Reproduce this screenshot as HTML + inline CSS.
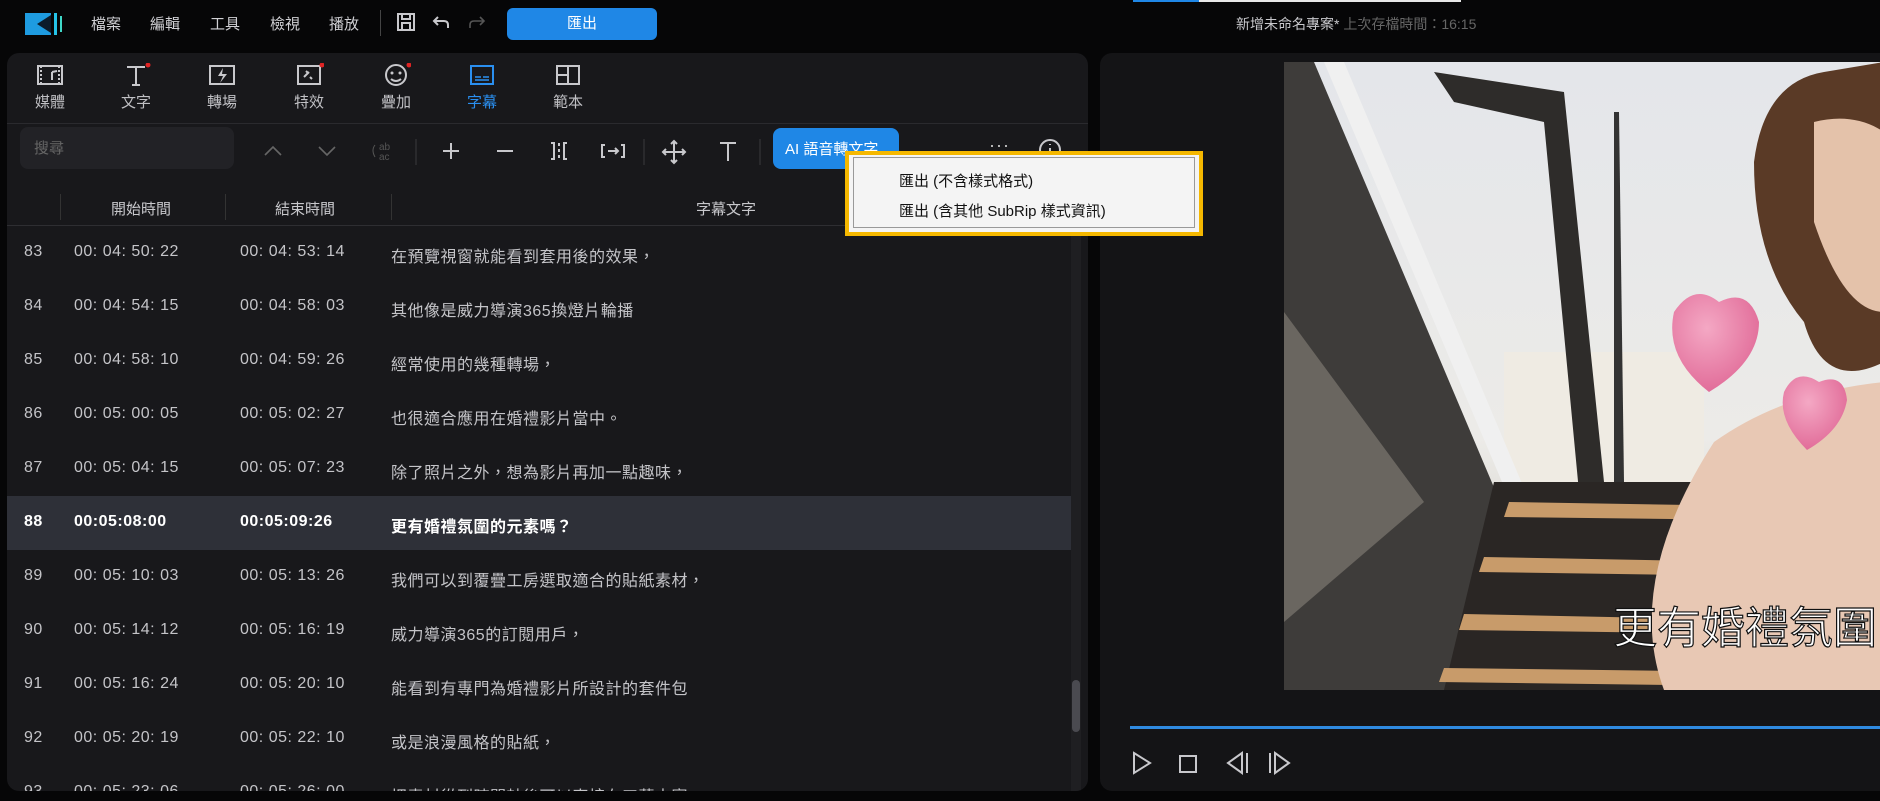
<!DOCTYPE html>
<html><head><meta charset="utf-8">
<style>
*{margin:0;padding:0;box-sizing:border-box}
body{width:1880px;height:801px;background:#060607;overflow:hidden;position:relative;font-family:"Liberation Sans","Noto Sans CJK TC",sans-serif;color:#c8c8cc}
.abs{position:absolute}
.menu span{position:absolute;top:13px;font-size:15px;color:#d0d0d4}
.panel{position:absolute;background:#18181b;border-radius:12px;overflow:hidden}
.tab{position:absolute;top:10px;width:60px;text-align:center;font-size:15px;color:#c0c0c4}
.tab svg{display:block;margin:0 auto 4px}
.row{position:absolute;left:0;width:1067px;height:54px;font-size:16px;color:#c4c4c8}
.row span{position:absolute;top:17px;letter-spacing:.5px}
.hl{background:#2e3038;color:#fff;font-weight:bold}
.ic{stroke:#c8c8cc;fill:none;stroke-width:2}
</style></head><body>
<!-- top bar -->
<svg class="abs" style="left:25px;top:11px" width="42" height="26"><rect x="0" y="2" width="26" height="22" fill="#1e9be0"/><path d="M26 4 L12 13 L26 22Z" fill="#0b1b2a"/><rect x="29" y="2" width="3" height="22" fill="#25c3e8"/><rect x="35" y="5" width="2" height="16" fill="#3fd8c8"/></svg>
<div class="menu"><span style="left:91px">檔案</span><span style="left:150px">編輯</span><span style="left:210px">工具</span><span style="left:270px">檢視</span><span style="left:329px">播放</span></div>
<div class="abs" style="left:380px;top:10px;width:1px;height:26px;background:#444"></div>
<svg class="abs" style="left:396px;top:12px" width="20" height="20"><rect x="2" y="2" width="16" height="16" class="ic" stroke-width="1.6"/><rect x="6" y="2" width="8" height="5" class="ic" stroke-width="1.4"/><rect x="6" y="11" width="8" height="7" class="ic" stroke-width="1.4"/></svg>
<svg class="abs" style="left:432px;top:14px" width="18" height="16"><path d="M6 3 L2 7 L6 11 M2 7 H12 Q16 7 16 11 V14" class="ic" stroke-width="1.6"/></svg>
<svg class="abs" style="left:468px;top:14px" width="18" height="16"><path d="M12 3 L16 7 L12 11 M16 7 H6 Q2 7 2 11 V14" stroke="#555" fill="none" stroke-width="1.6"/></svg>
<div class="abs" style="left:507px;top:8px;width:150px;height:32px;background:#1f87e6;border-radius:6px;color:#fff;font-size:15px;text-align:center;line-height:32px">匯出</div>
<div class="abs" style="left:1133px;top:0;width:66px;height:2px;background:#1f87e6"></div>
<div class="abs" style="left:1199px;top:0;width:262px;height:2px;background:#e8e8e8"></div>
<div class="abs" style="left:1236px;top:14px;font-size:14px;color:#c8c8cc">新增未命名專案* <span style="color:#666">上次存檔時間：16:15</span></div>

<!-- left panel -->
<div class="panel" style="left:7px;top:53px;width:1081px;height:738px">
 <div class="tab" style="left:13px"><svg width="30" height="24"><rect x="3" y="3" width="24" height="18" class="ic"/><path d="M6 3v18M24 3v18" stroke="#c8c8cc" stroke-dasharray="2 2" stroke-width="2"/><path d="M17 9v8M17 9l5-1" class="ic"/></svg>媒體</div>
 <div class="tab" style="left:99px"><svg width="30" height="24"><path d="M6 4H24M15 4V22M11 22h8" class="ic"/><circle cx="27" cy="2" r="2.5" fill="#e02424"/></svg>文字</div>
 <div class="tab" style="left:185px"><svg width="30" height="24"><rect x="3" y="3" width="24" height="18" class="ic"/><path d="M16 5L11 13h5l-3 7 7-9h-5z" fill="#c8c8cc"/></svg>轉場</div>
 <div class="tab" style="left:272px"><svg width="30" height="24"><rect x="4" y="3" width="22" height="18" class="ic"/><path d="M10 14l5-5M12 8l2 2M16 14l2 2" class="ic" stroke-width="1.5"/><circle cx="28" cy="2" r="2.5" fill="#e02424"/></svg>特效</div>
 <div class="tab" style="left:359px"><svg width="30" height="24"><circle cx="15" cy="12" r="10" class="ic"/><circle cx="11" cy="10" r="1.5" fill="#c8c8cc"/><circle cx="19" cy="10" r="1.5" fill="#c8c8cc"/><path d="M10 16q5 4 10 0" class="ic" stroke-width="1.6"/><circle cx="28" cy="2" r="2.5" fill="#e02424"/></svg>疊加</div>
 <div class="tab" style="left:445px;color:#2a8ff0"><svg width="30" height="24"><rect x="4" y="3" width="22" height="18" stroke="#2a8ff0" fill="none" stroke-width="2"/><path d="M8 14h6M16 14h6M8 17h14" stroke="#2a8ff0" stroke-width="1.5"/></svg>字幕</div>
 <div class="tab" style="left:531px"><svg width="30" height="24"><rect x="4" y="3" width="22" height="18" class="ic"/><path d="M15 3v18M4 12h11" class="ic"/></svg>範本</div>
 <div class="abs" style="left:0;top:70px;width:1081px;height:1px;background:#2a2a2e"></div>
 <!-- toolbar -->
 <div class="abs" style="left:13px;top:74px;width:214px;height:42px;background:#222226;border-radius:8px;font-size:15px;color:#666;padding:10px 14px">搜尋</div>
 <svg class="abs" style="left:255px;top:86px" width="520" height="26">
  <path d="M3 16l8-8 8 8M57 8l8 8 8-8" stroke="#666" fill="none" stroke-width="1.6"/>
  <text x="117" y="11" font-size="10" fill="#555" font-family="Liberation Sans">ab</text><text x="117" y="21" font-size="10" fill="#555" font-family="Liberation Sans">ac</text><path d="M113 6q-4 5 0 12" stroke="#555" fill="none"/>
  <line x1="154" y1="0" x2="154" y2="26" stroke="#3a3a3e"/>
  <path d="M181 12h16M189 4v16M235 12h16" class="ic"/>
  <path d="M289 4h3v16h-3M305 4h-3v16h3M297 4v3M297 10v3M297 16v3" class="ic" stroke-width="1.6"/>
  <path d="M343 6h-3v12h3M359 6h3v12h-3M346 12h10M353 9l3 3-3 3" class="ic" stroke-width="1.6"/>
  <line x1="382" y1="0" x2="382" y2="26" stroke="#3a3a3e"/>
  <path d="M412 2v22M401 13h22M409 5l3-3 3 3M409 21l3 3 3-3M404 10l-3 3 3 3M420 10l3 3-3 3" class="ic" stroke-width="1.6"/>
  <path d="M458 4h16M466 4v18" class="ic"/>
  <line x1="498" y1="0" x2="498" y2="26" stroke="#3a3a3e"/>
 </svg>
 <div class="abs" style="left:766px;top:75px;width:126px;height:41px;background:#1f87e6;border-radius:8px;color:#fff;font-size:15px;padding:10px 12px">AI 語音轉文字</div>
 <div class="abs" style="left:982px;top:82px;font-size:18px;color:#ccc;letter-spacing:1px">···</div>
 <svg class="abs" style="left:1030px;top:84px" width="26" height="26"><circle cx="13" cy="13" r="10" class="ic"/><path d="M13 11v7M13 7v1" class="ic"/></svg>
 <!-- header -->
 <div class="abs" style="left:0;top:137px;width:1081px;height:35px;font-size:15px;color:#c8c8cc">
  <div class="abs" style="left:53px;top:4px;width:1px;height:26px;background:#333"></div>
  <div class="abs" style="left:218px;top:4px;width:1px;height:26px;background:#333"></div>
  <div class="abs" style="left:384px;top:4px;width:1px;height:26px;background:#333"></div>
  <span class="abs" style="left:104px;top:8px">開始時間</span>
  <span class="abs" style="left:268px;top:8px">結束時間</span>
  <span class="abs" style="left:689px;top:8px">字幕文字</span>
 </div>
 <div class="abs" style="left:0;top:172px;width:1081px;height:1px;background:#2e2e32"></div>
 <div class="abs" style="left:0;top:173px;width:1081px;height:565px;overflow:hidden">
  <div class="row" style="top:0"><span style="left:17px">83</span><span style="left:67px">00: 04: 50: 22</span><span style="left:233px">00: 04: 53: 14</span><span style="left:384px">在預覽視窗就能看到套用後的效果，</span></div>
  <div class="row" style="top:54px"><span style="left:17px">84</span><span style="left:67px">00: 04: 54: 15</span><span style="left:233px">00: 04: 58: 03</span><span style="left:384px">其他像是威力導演365換燈片輪播</span></div>
  <div class="row" style="top:108px"><span style="left:17px">85</span><span style="left:67px">00: 04: 58: 10</span><span style="left:233px">00: 04: 59: 26</span><span style="left:384px">經常使用的幾種轉場，</span></div>
  <div class="row" style="top:162px"><span style="left:17px">86</span><span style="left:67px">00: 05: 00: 05</span><span style="left:233px">00: 05: 02: 27</span><span style="left:384px">也很適合應用在婚禮影片當中。</span></div>
  <div class="row" style="top:216px"><span style="left:17px">87</span><span style="left:67px">00: 05: 04: 15</span><span style="left:233px">00: 05: 07: 23</span><span style="left:384px">除了照片之外，想為影片再加一點趣味，</span></div>
  <div class="row hl" style="top:270px"><span style="left:17px">88</span><span style="left:67px">00:05:08:00</span><span style="left:233px">00:05:09:26</span><span style="left:384px">更有婚禮氛圍的元素嗎？</span></div>
  <div class="row" style="top:324px"><span style="left:17px">89</span><span style="left:67px">00: 05: 10: 03</span><span style="left:233px">00: 05: 13: 26</span><span style="left:384px">我們可以到覆疊工房選取適合的貼紙素材，</span></div>
  <div class="row" style="top:378px"><span style="left:17px">90</span><span style="left:67px">00: 05: 14: 12</span><span style="left:233px">00: 05: 16: 19</span><span style="left:384px">威力導演365的訂閱用戶，</span></div>
  <div class="row" style="top:432px"><span style="left:17px">91</span><span style="left:67px">00: 05: 16: 24</span><span style="left:233px">00: 05: 20: 10</span><span style="left:384px">能看到有專門為婚禮影片所設計的套件包</span></div>
  <div class="row" style="top:486px"><span style="left:17px">92</span><span style="left:67px">00: 05: 20: 19</span><span style="left:233px">00: 05: 22: 10</span><span style="left:384px">或是浪漫風格的貼紙，</span></div>
  <div class="row" style="top:540px"><span style="left:17px">93</span><span style="left:67px">00: 05: 23: 06</span><span style="left:233px">00: 05: 26: 00</span><span style="left:384px">把素材從到時間軸後可以直接在工藝中審</span></div>
  <div class="abs" style="left:1064px;top:0;width:10px;height:565px;background:#1f1f22"></div>
  <div class="abs" style="left:1065px;top:454px;width:8px;height:52px;background:#4a4a50;border-radius:4px"></div>
 </div>
</div>

<!-- right panel -->
<div class="panel" style="left:1100px;top:53px;width:800px;height:738px;background:#141416">
 <svg class="abs" style="left:184px;top:9px" width="600" height="628">
  <defs><linearGradient id="bg" x1="0" y1="0" x2="0" y2="1"><stop offset="0" stop-color="#e4e6ea"/><stop offset=".6" stop-color="#ecebe8"/><stop offset="1" stop-color="#c8c2b8"/></linearGradient>
  <radialGradient id="ht" cx=".4" cy=".35" r=".7"><stop offset="0" stop-color="#f4a8c4"/><stop offset="1" stop-color="#e06896"/></radialGradient></defs>
  <rect width="600" height="628" fill="url(#bg)"/>
  <rect x="220" y="290" width="200" height="170" fill="#efebe3"/>
  <path d="M0 0 L30 0 L250 520 L200 628 L0 628Z" fill="#3e3c3a"/>
  <path d="M0 250 L140 440 L0 560Z" fill="#6a6660"/>
  <path d="M40 0 L60 0 L250 450 L235 460Z" fill="#f0f0f0"/>
  <path d="M150 10 L280 30 L320 420 L295 430 L260 60 L170 40Z" fill="#2e2c2a"/>
  <path d="M330 50 L335 50 L340 420 L330 420Z" fill="#333"/>
  <path d="M210 420 L600 420 L600 628 L160 628Z" fill="#2a2624"/>
  <path d="M225 440 L470 444 L470 458 L220 455Z M200 495 L470 500 L470 514 L195 510Z M180 552 L470 558 L470 572 L175 568Z M160 606 L470 610 L470 624 L155 620Z" fill="#c89b6a"/>
  <path d="M430 380 Q500 330 600 320 L600 628 L380 628 Q340 520 430 380Z" fill="#e8c8b4"/>
  <path d="M470 100 Q480 20 540 10 L600 0 L600 300 Q540 330 520 260 Q470 200 470 100Z" fill="#5a3a26"/>
  <path d="M530 60 Q570 50 600 70 L600 250 Q560 250 530 160Z" fill="#e4c2aa"/>
  <path d="M390 250 q20 -30 45 -10 q30 -15 40 20 q0 40 -50 70 q-45 -35 -35 -80Z" fill="url(#ht)"/>
  <path d="M500 330 q12 -25 35 -10 q25 -10 28 18 q-5 30 -40 50 q-30 -30 -23 -58Z" fill="url(#ht)"/>
  <text x="329" y="581" font-size="44" fill="#fff" stroke="#111" stroke-width="1.2" font-family="Liberation Sans,Noto Sans CJK TC,sans-serif">更有婚禮氛圍的</text>
 </svg>
 <div class="abs" style="left:30px;top:673px;width:770px;height:3px;background:#2f8ae0"></div>
 <svg class="abs" style="left:30px;top:696px" width="200" height="30">
  <path d="M4 4 L20 14 L4 24Z" class="ic"/>
  <rect x="50" y="7" width="16" height="16" class="ic"/>
  <path d="M112 4 L98 14 L112 24Z M117 4v20" class="ic"/>
  <path d="M140 4v20 M145 4 L159 14 L145 24Z" class="ic"/>
 </svg>
</div>

<!-- dropdown -->
<div class="abs" style="left:845px;top:151px;width:358px;height:85px;border:4px solid #f5b800;background:#f4f4f4;z-index:10">
 <div class="abs" style="left:4px;top:2px;width:342px;height:71px;border:1px solid #999;background:#f4f4f4;font-size:15px;color:#111">
  <div class="abs" style="left:45px;top:12px">匯出 (不含樣式格式)</div>
  <div class="abs" style="left:45px;top:42px">匯出 (含其他 SubRip 樣式資訊)</div>
 </div>
</div>
</body></html>
